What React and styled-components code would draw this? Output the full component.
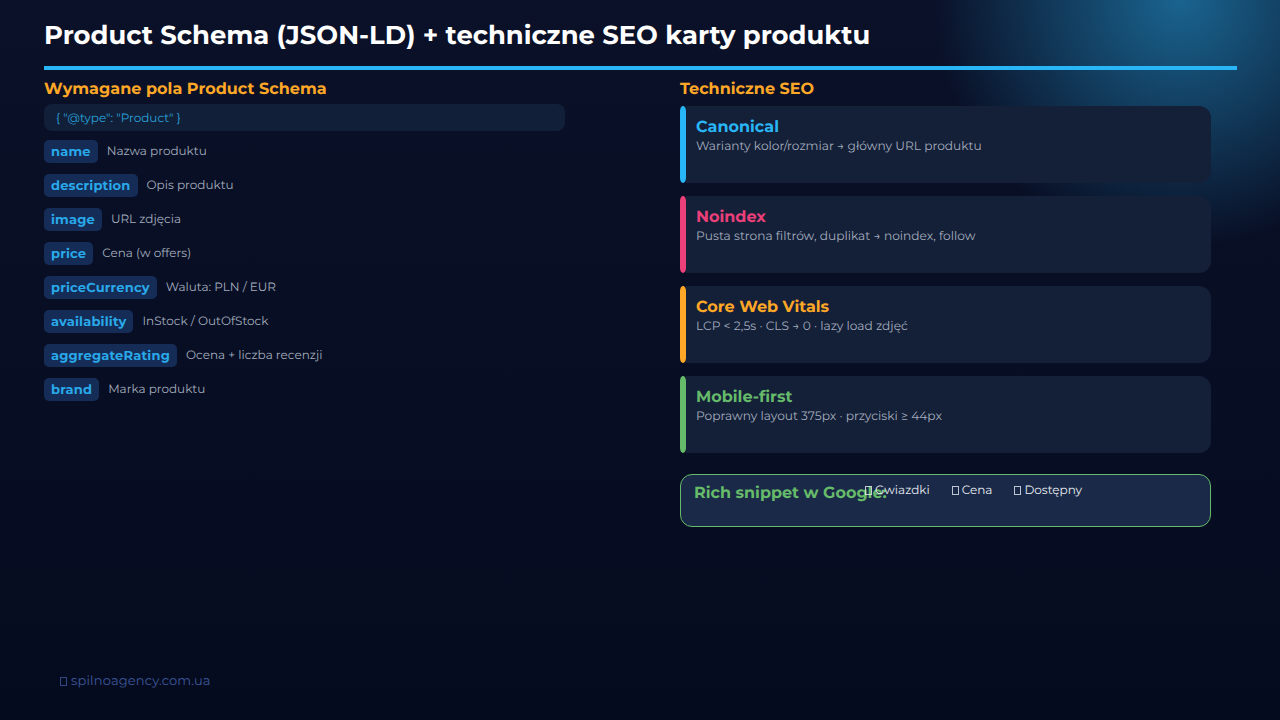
import React from "react";
import styled, { createGlobalStyle } from "styled-components";

const GlobalStyle = createGlobalStyle`
  html, body {
    margin: 0;
    padding: 0;
    width: 1280px;
    height: 720px;
    overflow: hidden;
    font-family: "Montserrat", "Inter", "Liberation Sans", sans-serif;
    text-rendering: geometricPrecision;
  }
`;

const Slide = styled.div`
  position: relative;
  box-sizing: border-box;
  width: 1280px;
  height: 720px;
  overflow: hidden;
  padding: 0 43px 0 44px;
  background: linear-gradient(180deg, #0a1128 0%, #050b1f 100%);
  display: flex;
  flex-direction: column;
`;

const Glow = styled.div`
  position: absolute;
  top: -250px;
  right: -150px;
  width: 500px;
  height: 500px;
  background: radial-gradient(circle, rgba(41, 182, 246, 0.5) 0%, rgba(41, 182, 246, 0) 70%);
`;

const Header = styled.header`
  position: relative;
  height: 70px;
  box-sizing: border-box;
  padding-top: 4px;
  border-bottom: 4px solid #29b6f6;
  display: flex;
  align-items: center;
`;

const Title = styled.h1`
  margin: 0;
  font-size: 25.87px;
  font-weight: 700;
  color: #fff;
`;

const Columns = styled.div`
  position: relative;
  display: grid;
  grid-template-columns: 636px 531px;
  margin-top: 8px;
`;

const Column = styled.section`
  display: flex;
  flex-direction: column;
`;

const Heading = styled.h2`
  margin: 0 0 ${(p) => p.$gap}px;
  line-height: 22px;
  padding-top: 1px;
  height: 21px;
  font-size: 16px;
  font-weight: 700;
  letter-spacing: 0.03px;
  color: #ffa726;
`;

const CodeBox = styled.div`
  box-sizing: border-box;
  width: 521px;
  height: 27px;
  padding: 0 12px;
  margin-bottom: 9px;
  border-radius: 8px;
  background: #112038;
  color: #29a0dc;
  font-size: 12px;
  line-height: 29px;
`;

const Field = styled.div`
  display: flex;
  align-items: center;
  gap: 9px;
  height: 23px;
  margin-bottom: 11px;
`;

const Pill = styled.span`
  padding: 0 7px;
  height: 23px;
  line-height: 24px;
  border-radius: 5px;
  background: #152c56;
  color: #29a9ea;
  font-size: 13px;
  font-weight: 700;
  letter-spacing: 0.2px;
`;

const FieldText = styled.span`
  font-size: 12px;
  line-height: 23px;
  align-self: flex-start;
  color: #a3adbd;
`;

const Card = styled.article`
  display: flex;
  height: 77px;
  margin-bottom: 13px;
`;

const Bar = styled.span`
  flex: none;
  width: 6px;
  border-radius: 3px / 5px;
  background: ${(p) => p.$color};
`;

const CardBody = styled.div`
  flex: 1;
  padding: 12px 10px 0;
  border-radius: 0 12px 12px 0;
  background: #141f38;
`;

const CardTitle = styled.div`
  font-size: 16px;
  font-weight: 700;
  line-height: 19px;
  color: ${(p) => p.$color};
`;

const CardText = styled.div`
  font-size: 12.2px;
  line-height: 20px;
  color: #a3adbd;
`;

const Snippet = styled.div`
  box-sizing: border-box;
  height: 53px;
  margin-top: 8px;
  padding: 9px 13px;
  border: 1px solid #66bb6a;
  border-radius: 12px;
  background: #1a2947;
  display: flex;
  align-items: flex-start;
`;

const SnippetTitle = styled.span`
  width: 171px;
  flex: none;
  white-space: nowrap;
  font-size: 16px;
  font-weight: 700;
  line-height: 20px;
  color: #66bb6a;
`;

const SnippetTags = styled.div`
  display: flex;
  gap: 22px;
  font-size: 12px;
  line-height: 14px;
  color: #e8ecf2;
`;

const Tofu = styled.span`
  display: inline-block;
  box-sizing: border-box;
  width: 7px;
  height: 9px;
  margin-right: ${(p) => p.$gap || 3}px;
  border: 1px solid currentColor;
  opacity: 0.8;
  vertical-align: -1px;
`;

const Footer = styled.footer`
  position: absolute;
  left: 60px;
  bottom: 31px;
  font-size: 13px;
  letter-spacing: 0.15px;
  color: #3d5799;
`;

const fields = [
  ["name", "Nazwa produktu"],
  ["description", "Opis produktu"],
  ["image", "URL zdjęcia"],
  ["price", "Cena (w offers)"],
  ["priceCurrency", "Waluta: PLN / EUR"],
  ["availability", "InStock / OutOfStock"],
  ["aggregateRating", "Ocena + liczba recenzji"],
  ["brand", "Marka produktu"],
];

const cards = [
  ["Canonical", "Warianty kolor/rozmiar → główny URL produktu", "#29b6f6"],
  ["Noindex", "Pusta strona filtrów, duplikat → noindex, follow", "#ec407a"],
  ["Core Web Vitals", "LCP < 2,5s · CLS → 0 · lazy load zdjęć", "#ffa726"],
  ["Mobile-first", "Poprawny layout 375px · przyciski ≥ 44px", "#66bb6a"],
];

export default function App() {
  return (
    <>
      <GlobalStyle />
      <Slide>
        <Glow />
        <Header>
          <Title>Product Schema (JSON-LD) + techniczne SEO karty produktu</Title>
        </Header>
        <Columns>
          <Column>
            <Heading $gap={4}>Wymagane pola Product Schema</Heading>
            <CodeBox>{'{ "@type": "Product" }'}</CodeBox>
            {fields.map(([name, text]) => (
              <Field key={name}>
                <Pill>{name}</Pill>
                <FieldText>{text}</FieldText>
              </Field>
            ))}
          </Column>
          <Column>
            <Heading $gap={6}>Techniczne SEO</Heading>
            {cards.map(([title, text, color]) => (
              <Card key={title}>
                <Bar $color={color} />
                <CardBody>
                  <CardTitle $color={color}>{title}</CardTitle>
                  <CardText>{text}</CardText>
                </CardBody>
              </Card>
            ))}
            <Snippet>
              <SnippetTitle>Rich snippet w Google:</SnippetTitle>
              <SnippetTags>
                <span><Tofu />Gwiazdki</span>
                <span><Tofu />Cena</span>
                <span><Tofu />Dostępny</span>
              </SnippetTags>
            </Snippet>
          </Column>
        </Columns>
        <Footer><Tofu $gap={4} />spilnoagency.com.ua</Footer>
      </Slide>
    </>
  );
}
